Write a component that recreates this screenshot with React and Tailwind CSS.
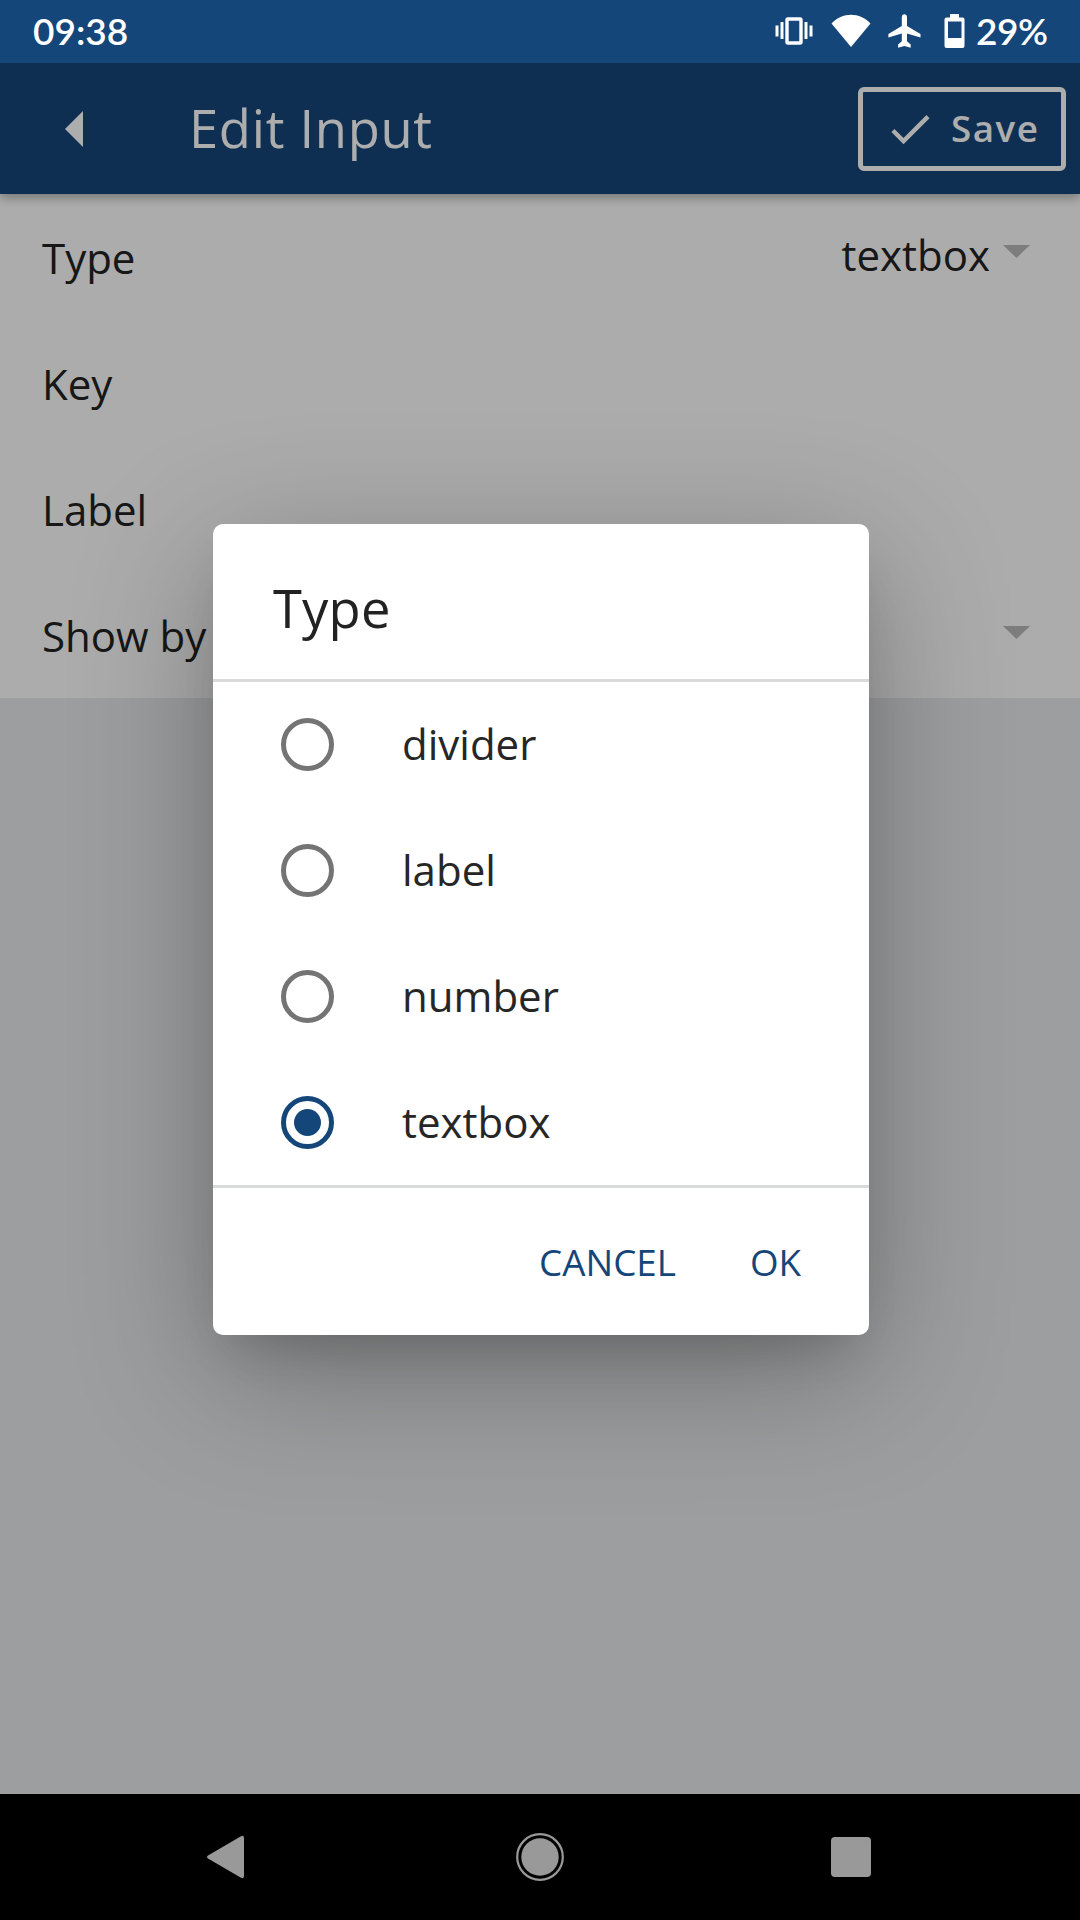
const options = ["divider", "label", "number", "textbox"];

const StatusBar = () => {
  return (
    <div className="flex h-[63px] items-center bg-[#15467a] pb-px pl-[33px] pr-[33px] font-['Lato',sans-serif] text-[37px] font-semibold leading-none text-white">
      <span className="mr-auto pb-px">09:38</span>
      <svg className="mr-[18px] h-[28px] w-[38px]" viewBox="0 0 38 28" fill="none" stroke="currentColor">
        <rect x="12" y="2" width="14" height="24" rx="1" strokeWidth="3.4" />
        <path d="M7 5v17M31 5v17M2 8.5v11M36 8.5v11" strokeWidth="3" />
      </svg>
      <svg className="mr-[17px] h-[34px] w-[40px]" viewBox="0 0 40 34" fill="currentColor">
        <path d="M0.5 9.5C11 -2.2 29 -2.2 39.5 9.5L20 33z" />
      </svg>
      <svg className="mr-[23px] h-[34px] w-[33px]" viewBox="0 0 33 34" fill="currentColor">
        <path d="M32.5 23.5v-3.4L19 12V3.2C19 1.5 17.9 0.3 16.4 0.3S13.8 1.5 13.8 3.2V12L0.4 20.1v3.4l13.4-4v7.8l-3.7 3.1v3.3l6.3-1.7 6.3 1.7v-3.3L19 27.3v-7.8z" />
      </svg>
      <svg className="mr-[11px] h-[34px] w-[21px]" viewBox="0 0 21 34" fill="currentColor" fillRule="evenodd">
        <path d="M6 0h9v3.5h3.5q2 0 2 2V32q0 2-2 2h-16q-2 0-2-2V5.5q0-2 2-2H6zM4 7.5v16.5h13.5V7.5z" />
      </svg>
      <span className="w-[71px] pb-px tracking-[-0.5px]">29%</span>
    </div>
  );
};

const Header = () => {
  return (
    <div className="relative flex h-[131px] items-center bg-[#15467a] pl-[65px] pr-[14px] text-white shadow-[0_4px_10px_rgba(0,0,0,0.3)]">
      <svg className="h-[36px] w-[18px]" viewBox="0 0 18 36" fill="currentColor">
        <path d="M18 0v36L0 18z" />
      </svg>
      <h1 className="ml-[106px] text-[52.5px] tracking-[0.7px]">Edit Input</h1>
      <button className="ml-auto flex h-[84px] w-[208px] items-center rounded-[6px] border-[5px] border-white pl-[21px]">
        <svg className="size-[52px]" viewBox="0 0 24 24" fill="currentColor">
          <path d="M9 16.17L4.83 12l-1.42 1.41L9 19 21 7l-1.41-1.41z" />
        </svg>
        <span className="ml-[15px] text-[36.75px] font-semibold tracking-[1.5px]">Save</span>
      </button>
    </div>
  );
};

const Caret = () => (
  <svg className="h-[13px] w-[27px] text-[#b8b8b8]" viewBox="0 0 27 13" fill="currentColor">
    <path d="M0 0h27L13.5 13z" />
  </svg>
);

const Row = ({ label, children }) => {
  return (
    <div className="flex h-[126px] items-center justify-between pl-[42px] pr-[50px] text-[42px]">
      <span>{label}</span>
      {children}
    </div>
  );
};

const Radio = ({ checked }) => (
  <span
    className={
      checked
        ? "flex size-[53px] items-center justify-center rounded-full border-[5px] border-[#15467a]"
        : "size-[53px] rounded-full border-[5px] border-[#747474]"
    }
  >
    {checked && <span className="size-[27px] rounded-full bg-[#15467a]" />}
  </span>
);

const TypeDialog = ({ value }) => {
  return (
    <div className="flex h-[811px] w-[656px] flex-col rounded-[10px] bg-white shadow-[0_30px_44px_-18px_rgba(0,0,0,0.15),0_36px_140px_rgba(0,0,0,0.3)]">
      <h2 className="flex h-[158px] items-center border-b-[3px] border-[#d9dada] pl-[60px] pt-3.5 text-[52.5px] tracking-[0.2px]">
        Type
      </h2>
      <div>
        {options.map((option) => (
          <div key={option} className="flex h-[125.75px] items-center pl-[68px] text-[42px] text-[#262626]">
            <Radio checked={option === value} />
            <span className="ml-[68px] pb-0.5">{option}</span>
          </div>
        ))}
      </div>
      <div className="flex flex-1 items-center justify-end gap-[74px] border-t-[3px] border-[#d9dada] pr-[68px] pt-0.5 text-[36.75px] text-[#15467a]">
        <button>CANCEL</button>
        <button>OK</button>
      </div>
    </div>
  );
};

const NavBar = () => {
  return (
    <div className="flex h-[126px] items-center bg-black pl-[206px] text-[#999999]">
      <svg className="h-[44px] w-[38px]" viewBox="0 0 38 44" fill="currentColor">
        <path d="M35 1.2Q38 0 38 3V41Q38 44 35 42.8L2 23.5Q0 22 2 20.5z" />
      </svg>
      <svg className="ml-[272px] size-[48px]" viewBox="0 0 48 48" fill="currentColor">
        <circle cx="24" cy="24" r="22.8" fill="none" stroke="currentColor" strokeWidth="2.2" />
        <circle cx="24" cy="24" r="18.7" />
      </svg>
      <span className="ml-[267px] size-[40px] rounded-[4px] bg-[#999999]" />
    </div>
  );
};

const App = () => {
  return (
    <div className="flex h-[1920px] w-[1080px] flex-col overflow-hidden font-['Open_Sans',sans-serif] text-[#222222]">
      <StatusBar />
      <div className="relative flex-1 overflow-hidden bg-[#e7e9ea]">
        <Header />
        <div className="bg-[#fefefe]">
          <Row label="Type">
            <div className="flex items-center gap-[13px] pb-[5px]">
              <span>textbox</span>
              <div className="pb-1.5">
                <Caret />
              </div>
            </div>
          </Row>
          <Row label="Key" />
          <Row label="Label" />
          <Row label="Show by">
            <div className="pb-[5px]">
              <Caret />
            </div>
          </Row>
        </div>
        <div className="absolute inset-0 flex items-center justify-center bg-black/32 pt-0.5 pl-0.5">
          <TypeDialog value="textbox" />
        </div>
      </div>
      <NavBar />
    </div>
  );
};

export default App;
